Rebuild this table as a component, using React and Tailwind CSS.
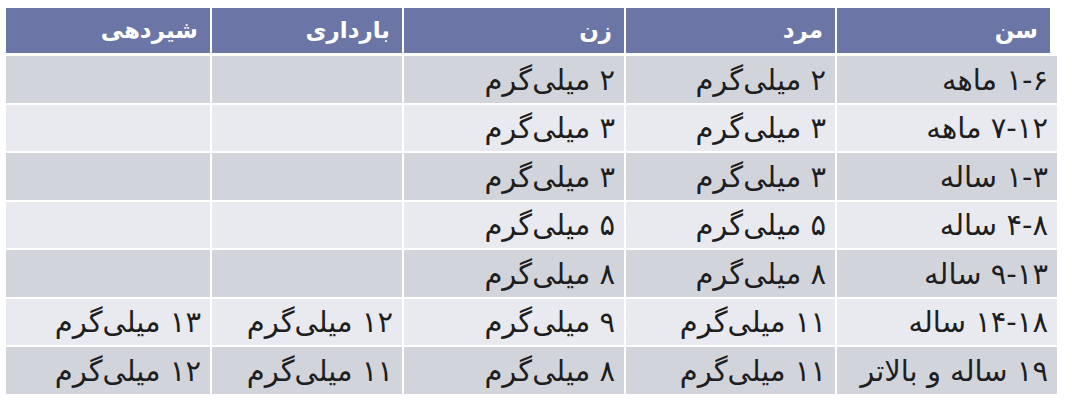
import React from 'react';

const headers = ['سن', 'مرد', 'زن', 'بارداری', 'شیردهی'];

const rows = [
  ['۱-۶ ماهه', '۲ میلی‌گرم', '۲ میلی‌گرم', '', ''],
  ['۷-۱۲ ماهه', '۳ میلی‌گرم', '۳ میلی‌گرم', '', ''],
  ['۱-۳ ساله', '۳ میلی‌گرم', '۳ میلی‌گرم', '', ''],
  ['۴-۸ ساله', '۵ میلی‌گرم', '۵ میلی‌گرم', '', ''],
  ['۹-۱۳ ساله', '۸ میلی‌گرم', '۸ میلی‌گرم', '', ''],
  ['۱۴-۱۸ ساله', '۱۱ میلی‌گرم', '۹ میلی‌گرم', '۱۲ میلی‌گرم', '۱۳ میلی‌گرم'],
  ['۱۹ ساله و بالاتر', '۱۱ میلی‌گرم', '۸ میلی‌گرم', '۱۱ میلی‌گرم', '۱۲ میلی‌گرم'],
];

// widths right to left (rtl order)
const headWidths = ['w-[213px]', 'w-[209px]', 'w-[220px]', 'w-[190px]', 'w-[204px]'];
const bodyWidths = ['w-[220px]', 'w-[209px]', 'w-[220px]', 'w-[190px]', 'w-[204px]'];

export default function App() {
  return (
    <div
      dir="rtl"
      className="w-[1080px] h-[402px] bg-white pt-[8px] pr-[23px] flex flex-col"
      style={{ fontFamily: '"DejaVu Sans", "Noto Sans", sans-serif' }}
    >
      {/* Header */}
      <div className="flex gap-x-[2px] mr-[7px]">
        {headers.map((h, i) => (
          <div
            key={i}
            className={`${headWidths[i]} h-[45px] bg-[#6c76a6] text-white font-bold text-[23px] flex items-center pr-[12px]`}
          >
            {h}
          </div>
        ))}
      </div>

      {/* Body */}
      <div className="flex flex-col gap-y-[2px] mt-[3px]">
        {rows.map((r, ri) => (
          <div key={ri} className="flex gap-x-[2px]">
            {r.map((c, ci) => (
              <div
                key={ci}
                className={`${bodyWidths[ci]} h-[46.5px] ${ri % 2 === 0 ? 'bg-[#d2d4dc]' : 'bg-[#e9eaef]'} text-[#1e1e1e] text-[29px] leading-none flex items-center pr-[9px] pt-[2px]`}
              >
                {c}
              </div>
            ))}
          </div>
        ))}
      </div>
    </div>
  );
}
